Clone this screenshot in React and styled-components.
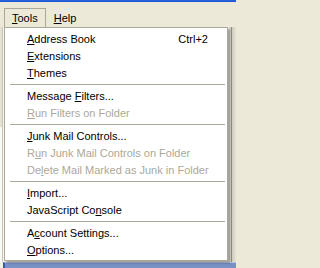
import React from "react";
import styled, { createGlobalStyle } from "styled-components";

const Global = createGlobalStyle`
  html, body { margin: 0; padding: 0; }
  body {
    width: 236px;
    height: 268px;
    overflow: hidden;
    background: #ece9d8;
    font-family: "Liberation Sans", Arial, sans-serif;
    font-size: 11px;
  }
`;

const Screen = styled.div`
  position: relative;
  width: 236px;
  height: 268px;
  display: grid;
  grid-template-rows: 2px 25px 1fr 6px;
  overflow: hidden;
`;

const TitleEdge = styled.div`
  background: linear-gradient(#2f66de, #1550d6);
`;

const MenuBar = styled.div`
  display: flex;
  align-items: flex-end;
  padding-left: 4px;
  background: #ece9d8;
`;

const BarTitle = styled.div`
  height: 19px;
  box-sizing: border-box;
  padding: 0 7px;
  display: flex;
  align-items: center;
  color: #000;
  border: 1px solid ${(p) => (p.$open ? "#aca899" : "transparent")};
  border-bottom: none;
  background: #ece9d8;
`;

const Workspace = styled.div`
  display: grid;
  grid-template-columns: 3px 1fr 7px;
`;

const LeftGutter = styled.div`
  background: linear-gradient(#e4e1d3 0, #e4e1d3 100px, #f8f8f5 100px);
  border-right: 1px solid #c9c6b8;
`;

const CenterPane = styled.div`
  background: #f5f4ee;
`;

const RightFrame = styled.div`
  background: linear-gradient(90deg, #d9d6c9 0, #d9d6c9 2px, #8f8c80 2px, #8f8c80 3px, #cfccbe 3px, #e6e3d7 100%);
`;

const BottomBar = styled.div`
  display: flex;
  background: #f0efe8;
`;

const BottomBlue = styled.div`
  flex: 1;
  margin-left: 3px;
  border-left: 2px solid #3b5a9c;
  border-top: 1px solid #b9c6e4;
  background: #7791c6;
`;

const Dropdown = styled.div`
  position: absolute;
  left: 4px;
  top: 27px;
  width: 224px;
  box-sizing: border-box;
  background: #ffffff;
  border: 1px solid #aca899;
  padding: 2px 0;
  box-shadow: 2px 2px 2px rgba(0, 0, 0, 0.35);
  display: flex;
  flex-direction: column;
`;

const Item = styled.div`
  height: 17px;
  display: flex;
  align-items: center;
  justify-content: space-between;
  padding: 0 19px 0 22px;
  color: ${(p) => (p.$disabled ? "#aca899" : "#000")};
  white-space: nowrap;
`;

const Shortcut = styled.span`
  color: inherit;
`;

const Separator = styled.div`
  height: 1px;
  margin: 3px 2px 2px 5px;
  background: #aca899;
`;

const Key = styled.u`
  text-decoration: underline;
  text-underline-offset: 1px;
`;

function Label({ text, k }) {
  if (k === undefined || k < 0) return <span>{text}</span>;
  return (
    <span>
      {text.slice(0, k)}
      <Key>{text[k]}</Key>
      {text.slice(k + 1)}
    </span>
  );
}

const menu = [
  { label: "Address Book", k: 0, shortcut: "Ctrl+2" },
  { label: "Extensions", k: 0 },
  { label: "Themes", k: 0 },
  { sep: true },
  { label: "Message Filters...", k: 8 },
  { label: "Run Filters on Folder", k: 0, disabled: true },
  { sep: true },
  { label: "Junk Mail Controls...", k: 0 },
  { label: "Run Junk Mail Controls on Folder", k: 1, disabled: true },
  { label: "Delete Mail Marked as Junk in Folder", k: 2, disabled: true },
  { sep: true },
  { label: "Import...", k: 0 },
  { label: "JavaScript Console", k: 13 },
  { sep: true },
  { label: "Account Settings...", k: 1 },
  { label: "Options...", k: 0 },
];

export default function App() {
  return (
    <>
      <Global />
      <Screen>
        <TitleEdge />
        <MenuBar>
          <BarTitle $open>
            <Label text="Tools" k={0} />
          </BarTitle>
          <BarTitle>
            <Label text="Help" k={0} />
          </BarTitle>
        </MenuBar>
        <Workspace>
          <LeftGutter />
          <CenterPane />
          <RightFrame />
        </Workspace>
        <BottomBar>
          <BottomBlue />
        </BottomBar>
        <Dropdown>
          {menu.map((m, i) =>
            m.sep ? (
              <Separator key={i} />
            ) : (
              <Item key={i} $disabled={m.disabled}>
                <Label text={m.label} k={m.k} />
                {m.shortcut && <Shortcut>{m.shortcut}</Shortcut>}
              </Item>
            )
          )}
        </Dropdown>
      </Screen>
    </>
  );
}
